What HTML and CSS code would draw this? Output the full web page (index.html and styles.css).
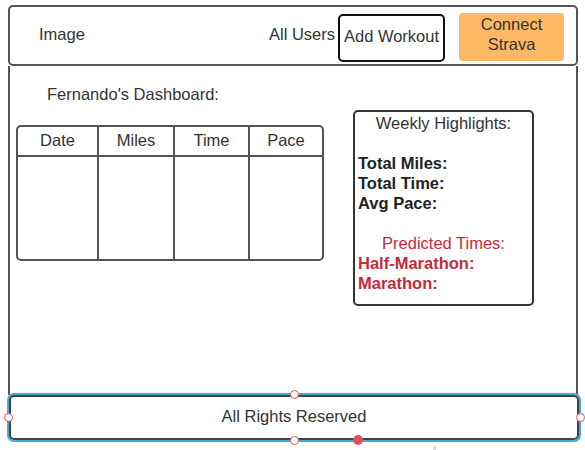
FILE: index.html
```html
<!DOCTYPE html>
<html>
<head>
<meta charset="utf-8">
<link rel="stylesheet" href="styles.css">
</head>
<body>
<div class="page">
  <header class="header">
    <div class="logo">Image</div>
    <nav class="nav">
      <span class="nav-link">All Users</span>
      <span class="btn-outline">Add Workout</span>
      <span class="btn-strava">Connect<br>Strava</span>
    </nav>
  </header>
  <main class="main">
    <div class="left">
      <div class="title">Fernando's Dashboard:</div>
      <div class="table">
        <div class="th">Date</div>
        <div class="th">Miles</div>
        <div class="th">Time</div>
        <div class="th last">Pace</div>
        <div class="td"></div>
        <div class="td"></div>
        <div class="td"></div>
        <div class="td last"></div>
      </div>
    </div>
    <div class="highlights">
      <div class="hl-title">Weekly Highlights:</div>
      <div class="blank"></div>
      <div class="stat">Total Miles:</div>
      <div class="stat">Total Time:</div>
      <div class="stat">Avg Pace:</div>
      <div class="blank"></div>
      <div class="pred-title">Predicted Times:</div>
      <div class="stat red">Half-Marathon:</div>
      <div class="stat red">Marathon:</div>
    </div>
  </main>
  <footer class="footer">
    All Rights Reserved
    <span class="handle h-top"></span>
    <span class="handle h-left"></span>
    <span class="handle h-right"></span>
    <span class="handle h-bottom"></span>
    <span class="dot"></span>
  </footer>
  <span class="tick"></span>
</div>
</body>
</html>
```
FILE: styles.css
```css
* { box-sizing: border-box; }
html, body { margin: 0; padding: 0; background: #fff; }
body {
  font-family: "Liberation Sans", Arial, sans-serif;
  font-size: 16.5px;
  color: #333;
}
.page {
  width: 585px;
  height: 450px;
  padding: 5px 0 0 8px;
  position: relative;
}
.header {
  width: 570px;
  height: 61px;
  border: 2px solid #555;
  border-radius: 5px;
  display: flex;
  align-items: center;
  justify-content: space-between;
}
.logo {
  margin-left: 29px;
  margin-top: -2px;
}
.nav {
  display: flex;
  align-items: center;
  margin-right: 12px;
}
.nav-link {
  margin-top: -3px;
  margin-right: 3px;
}
.btn-outline {
  width: 107px;
  height: 48px;
  border: 2px solid #111;
  border-radius: 5px;
  display: flex;
  align-items: center;
  justify-content: center;
  padding-bottom: 3px;
  margin-top: 4px;
}
.btn-strava {
  width: 105px;
  height: 48px;
  margin-left: 14px;
  background: #ffb866;
  border-radius: 4px;
  text-align: center;
  line-height: 20px;
  padding-top: 1px;
  margin-top: 3px;
}
.main {
  width: 570px;
  height: 329px;
  border-left: 2px solid #555;
  border-right: 2px solid #555;
  display: flex;
  align-items: flex-start;
}
.left {
  display: flex;
  flex-direction: column;
}
.title {
  margin-top: 19px;
  margin-left: 37px;
  line-height: 18px;
}
.table {
  margin-top: 22px;
  margin-left: 6px;
  width: 308px;
  height: 136px;
  border: 2px solid #555;
  border-radius: 5px;
  display: grid;
  grid-template-columns: 81px 76px 75px 1fr;
  grid-template-rows: 30px 1fr;
}
.th {
  border-right: 2px solid #555;
  border-bottom: 2px solid #555;
  text-align: center;
  line-height: 26px;
}
.td {
  border-right: 2px solid #555;
}
.last { border-right: none; }
.highlights {
  margin-top: 44px;
  margin-left: 29px;
  width: 181px;
  height: 196px;
  border: 2px solid #333;
  border-radius: 5px;
  padding: 1px 0 0 3px;
  line-height: 20px;
}
.hl-title {
  text-align: center;
  padding-right: 3px;
}
.blank { height: 20px; }
.stat {
  font-weight: bold;
  color: #222;
}
.pred-title {
  text-align: center;
  color: #c42b3a;
  padding-right: 3px;
}
.red { color: #c42b3a; }
.footer {
  width: 570px;
  height: 45px;
  border: 2px solid #444;
  border-radius: 5px;
  box-shadow: 0 0 0 2px #4aa8d8;
  display: flex;
  align-items: center;
  justify-content: center;
  padding-bottom: 2px;
  position: relative;
  margin-left: 1px;
}
.handle {
  position: absolute;
  width: 9px;
  height: 9px;
  border-radius: 50%;
  background: #fff;
  border: 1.5px solid #e0505f;
}
.h-top { top: -7px; left: 279px; }
.h-bottom { bottom: -7px; left: 279px; }
.h-left { left: -7px; top: 16px; }
.h-right { right: -8px; top: 16px; }
.dot {
  position: absolute;
  width: 10px;
  height: 10px;
  border-radius: 50%;
  background: #e0505f;
  bottom: -7px;
  left: 342px;
}
.tick {
  position: absolute;
  left: 433px;
  top: 446px;
  width: 3px;
  height: 4px;
  background: #ddd;
}
```
